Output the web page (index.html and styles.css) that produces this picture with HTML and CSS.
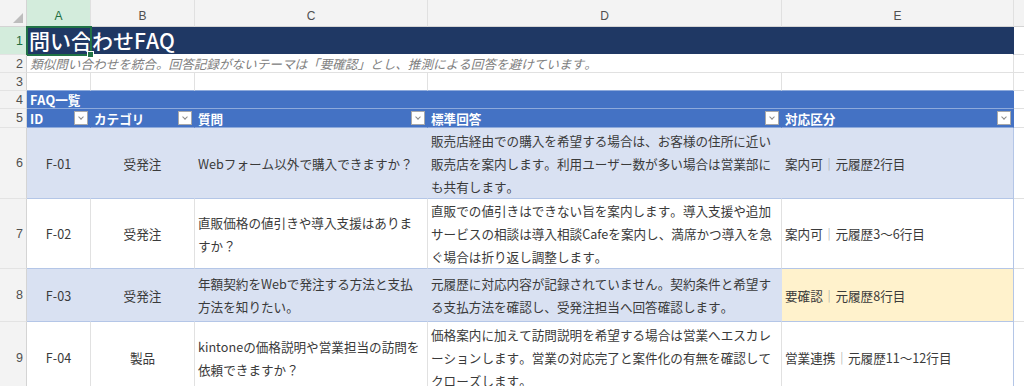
FILE: index.html
```
<!DOCTYPE html>
<html lang="ja">
<head>
<meta charset="utf-8">
<title>問い合わせFAQ</title>
<link rel="stylesheet" href="styles.css">
</head>
<body>
<div class="sheet">

  <!-- column headers -->
  <div class="row r-hdr">
    <div class="corner"><span class="tri"></span></div>
    <div class="colhdr sel">A</div>
    <div class="colhdr">B</div>
    <div class="colhdr">C</div>
    <div class="colhdr">D</div>
    <div class="colhdr">E</div>
    <div class="colhdr rest"></div>
  </div>

  <!-- 1 -->
  <div class="row r1">
    <div class="rowhdr sel">1</div>
    <div class="cell title span5">問い合わせFAQ</div>
    <div class="cell rest"></div>
    <div class="selbox"><span class="handle"></span></div>
  </div>

  <!-- 2 -->
  <div class="row r2">
    <div class="rowhdr">2</div>
    <div class="cell note span5">類似問い合わせを統合。回答記録がないテーマは「要確認」とし、推測による回答を避けています。</div>
    <div class="cell rest"></div>
  </div>

  <!-- 3 -->
  <div class="row r3">
    <div class="rowhdr">3</div>
    <div class="cell"></div>
    <div class="cell"></div>
    <div class="cell"></div>
    <div class="cell"></div>
    <div class="cell"></div>
    <div class="cell rest"></div>
  </div>

  <!-- 4 -->
  <div class="row r4">
    <div class="rowhdr">4</div>
    <div class="cell section span5">FAQ一覧</div>
    <div class="cell rest"></div>
  </div>

  <!-- 5 -->
  <div class="row r5">
    <div class="rowhdr">5</div>
    <div class="cell th">ID<span class="filter"></span></div>
    <div class="cell th">カテゴリ<span class="filter"></span></div>
    <div class="cell th">質問<span class="filter"></span></div>
    <div class="cell th">標準回答<span class="filter"></span></div>
    <div class="cell th">対応区分<span class="filter"></span></div>
    <div class="cell rest"></div>
  </div>

  <!-- 6 -->
  <div class="row r6 band">
    <div class="rowhdr">6</div>
    <div class="cell center">F-01</div>
    <div class="cell center">受発注</div>
    <div class="cell">Webフォーム以外で購入できますか？</div>
    <div class="cell">販売店経由での購入を希望する場合は、お客様の住所に近い<br>販売店を案内します。利用ユーザー数が多い場合は営業部に<br>も共有します。</div>
    <div class="cell last">案内可<span class="sep">｜</span>元履歴2行目</div>
    <div class="cell rest"></div>
  </div>

  <!-- 7 -->
  <div class="row r7">
    <div class="rowhdr">7</div>
    <div class="cell center">F-02</div>
    <div class="cell center">受発注</div>
    <div class="cell">直販価格の値引きや導入支援はありま<br>すか？</div>
    <div class="cell">直販での値引きはできない旨を案内します。導入支援や追加<br>サービスの相談は導入相談Cafeを案内し、満席かつ導入を急<br>ぐ場合は折り返し調整します。</div>
    <div class="cell last">案内可<span class="sep">｜</span>元履歴3〜6行目</div>
    <div class="cell rest"></div>
  </div>

  <!-- 8 -->
  <div class="row r8 band">
    <div class="rowhdr">8</div>
    <div class="cell center">F-03</div>
    <div class="cell center">受発注</div>
    <div class="cell">年額契約をWebで発注する方法と支払<br>方法を知りたい。</div>
    <div class="cell">元履歴に対応内容が記録されていません。契約条件と希望す<br>る支払方法を確認し、受発注担当へ回答確認します。</div>
    <div class="cell last check">要確認<span class="sep">｜</span>元履歴8行目</div>
    <div class="cell rest"></div>
  </div>

  <!-- 9 -->
  <div class="row r9">
    <div class="rowhdr">9</div>
    <div class="cell center">F-04</div>
    <div class="cell center">製品</div>
    <div class="cell">kintoneの価格説明や営業担当の訪問を<br>依頼できますか？</div>
    <div class="cell">価格案内に加えて訪問説明を希望する場合は営業へエスカレ<br>ーションします。営業の対応完了と案件化の有無を確認して<br>クローズします。</div>
    <div class="cell last">営業連携<span class="sep">｜</span>元履歴11〜12行目</div>
    <div class="cell rest"></div>
  </div>

</div>
</body>
</html>
```

FILE: styles.css
```
html, body { margin: 0; padding: 0; background: #ffffff; overflow: hidden; }
body { font-family: "Noto Sans CJK JP", "Noto Sans", sans-serif; font-size: 12.6px; color: #3a3a3a; font-kerning: none; }

.sheet { width: 1024px; height: 386px; overflow: hidden; }

/* every row uses the same column track */
.row { position: relative; display: grid; grid-template-columns: 27px 64px 104px 233px 354px 232px 10px; }
.r-hdr { height: 27px; }
.r1 { height: 28px; }
.r2, .r3, .r4 { height: 18px; }
.r5 { height: 19px; }
.r6 { height: 71px; }
.r7 { height: 70px; }
.r8 { height: 53px; }
.r9 { height: 72px; }

/* headers */
.corner { background: #f3f3f3; border-right: 1px solid #d4d4d4; border-bottom: 1px solid #d4d4d4; box-sizing: border-box; position: relative; }
.tri { position: absolute; right: 3px; bottom: 3px; width: 0; height: 0; border-left: 10px solid transparent; border-bottom: 10px solid #bdbdbd; }
.colhdr { box-sizing: border-box; background: #f3f3f3; border-right: 1px solid #e0e0e0; border-bottom: 1px solid #d4d4d4;
  display: flex; align-items: flex-end; justify-content: center; padding-bottom: 3px;
  font-family: "Liberation Sans", "Noto Sans", sans-serif; font-size: 12px; color: #505050; }
.colhdr.sel { background: #d3ecdc; color: #1e6e42; border-bottom: 1px solid #9fcfb2; }
.colhdr.rest { border-right: none; }
.rowhdr { box-sizing: border-box; background: #f3f3f3; border-right: 1px solid #d4d4d4; border-bottom: 1px solid #e3e3e3;
  display: flex; align-items: center; justify-content: flex-end; padding-right: 3px;
  font-family: "Liberation Sans", "Noto Sans", sans-serif; font-size: 12.5px; color: #505050; }
.rowhdr.sel { background: #d3ecdc; color: #1e6e42; }

/* cells */
.cell { box-sizing: border-box; border-right: 1px solid #e1e1e1; border-bottom: 1px solid #e1e1e1;
  display: flex; align-items: center; padding: 0 3px; white-space: nowrap; line-height: 23px; overflow: hidden; }
.cell.rest { border-right: none; }
.span5 { grid-column: 2 / 7; }
.center { justify-content: center; }

.title { background: #1f3864; color: #ffffff; font-size: 21px; font-weight: 500; border-right: 1px solid #1f3864; border-bottom: 1px solid #ffffff; padding-left: 2px; }
.note { color: #808080; font-style: italic; }
.section { background: #4472c4; color: #ffffff; font-weight: bold; border-right: 1px solid #4472c4; border-bottom: 1px solid #8eaadb; line-height: 17px; }
.r3 .cell:not(.rest) { border-bottom: 1px solid #8eaadb; }

.th { background: #4472c4; color: #ffffff; font-weight: bold; justify-content: space-between; border-right: 1px solid #4472c4; border-bottom: 1px solid #8eaadb; line-height: 17px; padding-right: 2px; }
.filter { width: 14px; height: 14px; box-sizing: border-box; background: #ffffff; border: 1px solid #a9a9a9; position: relative; flex: none; }
.filter::after { content: ""; position: absolute; left: 4px; top: 3px; width: 3px; height: 3px; border-right: 1px solid #8a8a8a; border-bottom: 1px solid #8a8a8a; transform: rotate(45deg); }

.r6 .cell:not(.rest), .r7 .cell:not(.rest), .r8 .cell:not(.rest), .r9 .cell:not(.rest) { border-bottom: 1px solid #b4c6e7; }
.band .cell:not(.rest) { background: #d9e1f2; border-right-color: #d9e1f2; }
.cell.last { border-right: 1px solid #b4c6e7; }
.band .cell.last { border-right-color: #b4c6e7; }
.band .cell.check { background: #fff2cc; }
.sep { color: #a0a0a0; }

/* active cell A1 */
.selbox { position: absolute; left: 26px; top: -1px; width: 66px; height: 30px; box-sizing: border-box; border: 2px solid #217346; pointer-events: none; }
.handle { position: absolute; right: -4px; bottom: -4px; width: 5px; height: 5px; background: #217346; border: 1px solid #ffffff; }
```
